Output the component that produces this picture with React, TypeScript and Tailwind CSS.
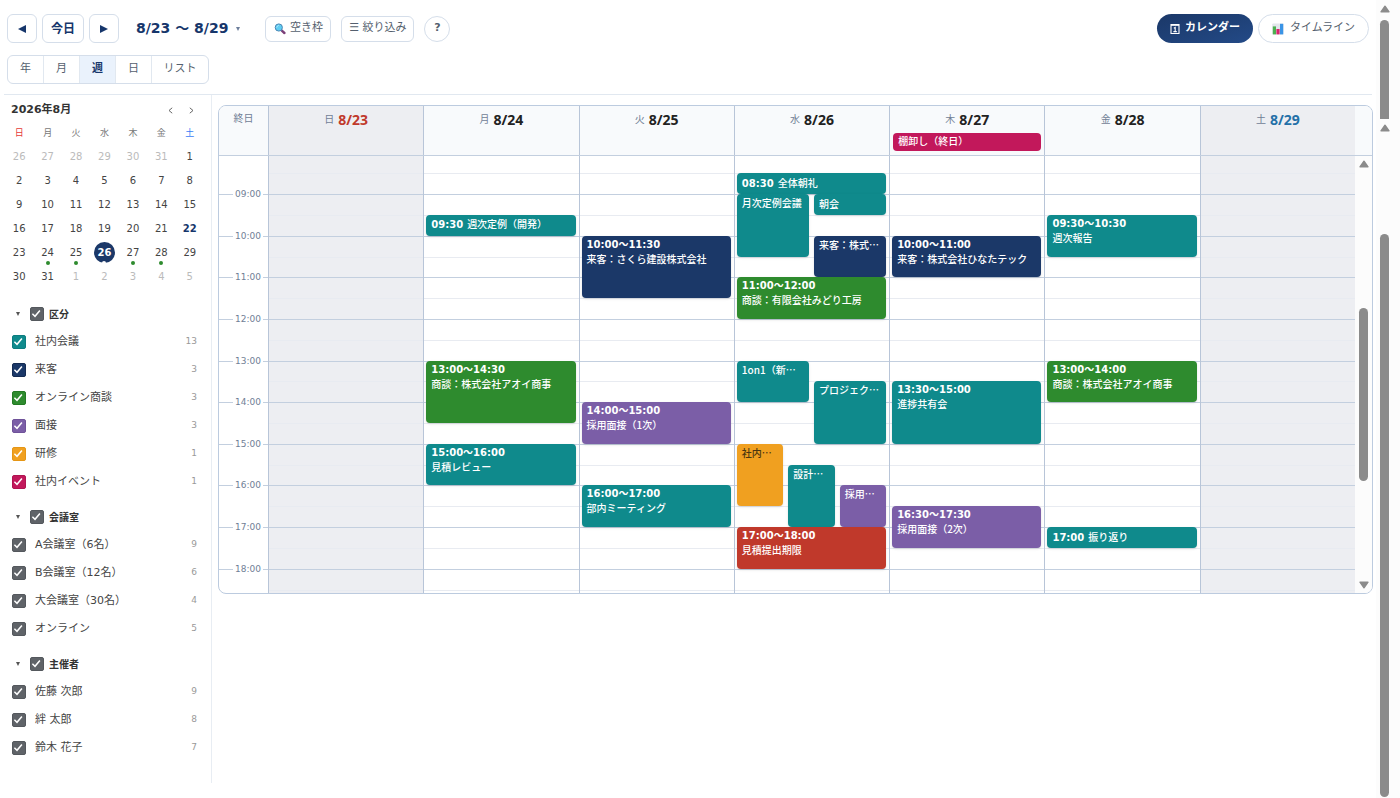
import React from 'react';

type Tone = 'teal' | 'navy' | 'green' | 'purple' | 'orange' | 'red' | 'pink' | 'gray';

const TONES: Record<Tone, string> = {
  teal: 'bg-[#0f8a8c] border-[#0c7d7f]',
  navy: 'bg-[#1b3868] border-[#142b52]',
  green: 'bg-[#2e8b2e] border-[#237a23]',
  purple: 'bg-[#7b5ea7] border-[#6f5299]',
  orange: 'bg-[#f0a020] border-[#e59615]',
  red: 'bg-[#c0392b] border-[#a93226]',
  pink: 'bg-[#c2185b] border-[#b01451]',
  gray: 'bg-[#5f6368] border-[#54585d]',
};

interface CalEvent {
  start: number;
  end: number;
  title: string;
  tone: Tone;
  time?: string;
  inline?: boolean;
  lane?: string;
}

interface Day {
  name: string;
  date: string;
  color: string;
  weekend?: boolean;
  allDay?: string;
  col: string;
  events: CalEvent[];
}

const DAYS: Day[] = [
  { name: '日', date: '8/23', color: 'text-[#c0392b]', weekend: true, col: 'col-start-2', events: [] },
  {
    name: '月', date: '8/24', color: 'text-[#222222]', col: 'col-start-3',
    events: [
      { start: 9.5, end: 10, time: '09:30', title: '週次定例（開発）', tone: 'teal', inline: true },
      { start: 13, end: 14.5, time: '13:00〜14:30', title: '商談：株式会社アオイ商事', tone: 'green' },
      { start: 15, end: 16, time: '15:00〜16:00', title: '見積レビュー', tone: 'teal' },
    ],
  },
  {
    name: '火', date: '8/25', color: 'text-[#222222]', col: 'col-start-4',
    events: [
      { start: 10, end: 11.5, time: '10:00〜11:30', title: '来客：さくら建設株式会社', tone: 'navy' },
      { start: 14, end: 15, time: '14:00〜15:00', title: '採用面接（1次）', tone: 'purple' },
      { start: 16, end: 17, time: '16:00〜17:00', title: '部内ミーティング', tone: 'teal' },
    ],
  },
  {
    name: '水', date: '8/26', color: 'text-[#222222]', col: 'col-start-5',
    events: [
      { start: 8.5, end: 9, time: '08:30', title: '全体朝礼', tone: 'teal', inline: true },
      { start: 9, end: 10.5, title: '月次定例会議', tone: 'teal', lane: 'col-start-1 col-span-3' },
      { start: 9, end: 9.5, title: '朝会', tone: 'teal', lane: 'col-start-4 col-span-3', inline: true },
      { start: 10, end: 11, title: '来客：株式…', tone: 'navy', lane: 'col-start-4 col-span-3' },
      { start: 11, end: 12, time: '11:00〜12:00', title: '商談：有限会社みどり工房', tone: 'green' },
      { start: 13, end: 14, title: '1on1（新…', tone: 'teal', lane: 'col-start-1 col-span-3' },
      { start: 13.5, end: 15, title: 'プロジェク…', tone: 'teal', lane: 'col-start-4 col-span-3' },
      { start: 15, end: 16.5, title: '社内…', tone: 'orange', lane: 'col-start-1 col-span-2' },
      { start: 15.5, end: 17, title: '設計…', tone: 'teal', lane: 'col-start-3 col-span-2' },
      { start: 16, end: 17, title: '採用…', tone: 'purple', lane: 'col-start-5 col-span-2' },
      { start: 17, end: 18, time: '17:00〜18:00', title: '見積提出期限', tone: 'red' },
    ],
  },
  {
    name: '木', date: '8/27', color: 'text-[#222222]', allDay: '棚卸し（終日）', col: 'col-start-6',
    events: [
      { start: 10, end: 11, time: '10:00〜11:00', title: '来客：株式会社ひなたテック', tone: 'navy' },
      { start: 13.5, end: 15, time: '13:30〜15:00', title: '進捗共有会', tone: 'teal' },
      { start: 16.5, end: 17.5, time: '16:30〜17:30', title: '採用面接（2次）', tone: 'purple' },
    ],
  },
  {
    name: '金', date: '8/28', color: 'text-[#222222]', col: 'col-start-7',
    events: [
      { start: 9.5, end: 10.5, time: '09:30〜10:30', title: '週次報告', tone: 'teal' },
      { start: 13, end: 14, time: '13:00〜14:00', title: '商談：株式会社アオイ商事', tone: 'green' },
      { start: 17, end: 17.5, time: '17:00', title: '振り返り', tone: 'teal', inline: true },
    ],
  },
  { name: '土', date: '8/29', color: 'text-[#2470a8]', weekend: true, col: 'col-start-8', events: [] },
];

/* The visible range starts at 08:05 and each grid row is five minutes. */
const rowOf = (hour: number) => Math.round(hour * 12) - 97 + 1;

const HOURS = [9, 10, 11, 12, 13, 14, 15, 16, 17, 18];
const HALVES = [8.5, 9.5, 10.5, 11.5, 12.5, 13.5, 14.5, 15.5, 16.5, 17.5, 18.5];

const MONTH: number[][] = [
  [26, 27, 28, 29, 30, 31, 1],
  [2, 3, 4, 5, 6, 7, 8],
  [9, 10, 11, 12, 13, 14, 15],
  [16, 17, 18, 19, 20, 21, 22],
  [23, 24, 25, 26, 27, 28, 29],
  [30, 31, 1, 2, 3, 4, 5],
];

interface Filter {
  label: string;
  count: number;
  tone: Tone;
}

const GROUPS: { title: string; items: Filter[] }[] = [
  {
    title: '区分',
    items: [
      { label: '社内会議', count: 13, tone: 'teal' },
      { label: '来客', count: 3, tone: 'navy' },
      { label: 'オンライン商談', count: 3, tone: 'green' },
      { label: '面接', count: 3, tone: 'purple' },
      { label: '研修', count: 1, tone: 'orange' },
      { label: '社内イベント', count: 1, tone: 'pink' },
    ],
  },
  {
    title: '会議室',
    items: [
      { label: 'A会議室（6名）', count: 9, tone: 'gray' },
      { label: 'B会議室（12名）', count: 6, tone: 'gray' },
      { label: '大会議室（30名）', count: 4, tone: 'gray' },
      { label: 'オンライン', count: 5, tone: 'gray' },
    ],
  },
  {
    title: '主催者',
    items: [
      { label: '佐藤 次郎', count: 9, tone: 'gray' },
      { label: '絆 太郎', count: 8, tone: 'gray' },
      { label: '鈴木 花子', count: 7, tone: 'gray' },
    ],
  },
];

function Check({ tone, id }: { tone: Tone; id: string }) {
  return (
    <span className="grid size-3.5 shrink-0">
      <input
        id={id}
        type="checkbox"
        defaultChecked
        className={`col-start-1 row-start-1 size-3.5 appearance-none rounded-[2px] border ${TONES[tone]}`}
      />
      <svg viewBox="0 0 14 14" className="pointer-events-none col-start-1 row-start-1 size-3.5" aria-hidden="true">
        <path d="M2.4 6.800 5 9.300 9.900 3.500" fill="none" stroke="#fff" strokeWidth="1.5" />
      </svg>
    </span>
  );
}

function Triangle({ className, d }: { className: string; d: string }) {
  return (
    <svg viewBox="0 0 10 8" className={className} aria-hidden="true">
      <path d={d} fill="currentColor" stroke="currentColor" strokeWidth="1.4" strokeLinejoin="round" />
    </svg>
  );
}

const UP = 'M5 1.2 9 6.8H1z';
const DOWN = 'M5 6.8 9 1.2H1z';

function SearchIcon() {
  return (
    <svg viewBox="0 0 12 12" className="size-3" aria-hidden="true">
      <path d="M7.8 7.6 10.4 10" stroke="#7b3f78" strokeWidth="2.4" strokeLinecap="round" />
      <circle cx="4.8" cy="4.5" r="3.6" fill="#5fcdf2" stroke="#4a86b4" strokeWidth="1" />
      <path d="M2.8 4.200a2.200 2.200 0 0 1 1.600-1.800" stroke="#b5ecff" strokeWidth=".9" fill="none" strokeLinecap="round" />
    </svg>
  );
}

function ChartIcon() {
  return (
    <svg viewBox="0 0 12 12" className="size-3" aria-hidden="true">
      <rect x=".3" y=".4" width="11.4" height="11.2" rx=".8" fill="#e3e6ec" />
      <rect x=".8" y="3.400" width="3.200" height="8" fill="#4cb050" />
      <rect x="4.400" y="6" width="3.200" height="5.400" fill="#d8246c" />
      <rect x="8" y=".8" width="3.200" height="10.600" fill="#3a94e6" />
    </svg>
  );
}

function DayIcon() {
  return (
    <svg viewBox="0 0 10 12" className="h-3 w-2.5" aria-hidden="true">
      <path d="M1 1.500h8v9H1z" fill="none" stroke="#fff" strokeWidth="1.1" />
      <path d="M1 2.100h8" stroke="#fff" strokeWidth="1.500" />
      <path d="M3.800 5.200 5.200 4.500v4M3.400 8.600h3.400" fill="none" stroke="#fff" strokeWidth="1.1" />
    </svg>
  );
}

function Toolbar() {
  const nav = 'flex h-[29px] items-center justify-center rounded-md border border-[#d5deea] bg-white text-[#16366b]';
  const tool = 'flex h-[26px] items-center justify-center rounded-md border border-[#d5deea] bg-white text-[11px] text-[#555f6e]';
  return (
    <header className="ml-1 mr-1 border-b border-[#e1e8f0] pb-2.5 pl-[3px] pr-[3px] pt-3.5">
      <div className="flex items-center">
        <div className="flex gap-[5px]">
          <button aria-label="前の週" className={`${nav} w-[30px]`}>
            <svg viewBox="0 0 8 8" className="size-2"><path d="M8 0v8L0 4z" fill="currentColor" /></svg>
          </button>
          <button className={`${nav} w-[42px] text-[12px] font-bold`}>今日</button>
          <button aria-label="次の週" className={`${nav} w-[30px]`}>
            <svg viewBox="0 0 8 8" className="size-2"><path d="M0 0v8l8-4z" fill="currentColor" /></svg>
          </button>
        </div>
        <button className="ml-[17px] flex items-center gap-2 whitespace-nowrap text-[14px] font-bold text-[#16366b]">
          <span>8/23 〜 8/29</span>
          <svg viewBox="0 0 4 4" className="size-1 text-[#6d7f9c]"><path d="M0 0h4L2 4z" fill="currentColor" /></svg>
        </button>
        <button className={`${tool} ml-[25px] w-[66px] gap-1`}>
          <SearchIcon />
          <span>空き枠</span>
        </button>
        <button className={`${tool} ml-2.5 w-[73px]`}>☰ 絞り込み</button>
        <button className="ml-2.5 size-[26px] rounded-full border border-[#d5deea] text-[11px] font-bold text-[#555f6e]">?</button>
        <div className="ml-auto flex gap-[5px]">
          <button className="flex h-[29px] w-24 items-center justify-center gap-[5px] rounded-full bg-linear-to-br from-[#1b3868] to-[#234a87] text-[11px] font-bold text-white">
            <DayIcon />
            <span>カレンダー</span>
          </button>
          <button className="flex h-[29px] w-[111px] items-center justify-center gap-1.5 rounded-full border border-[#d5deea] text-[11px] text-[#555f6e]">
            <ChartIcon />
            <span>タイムライン</span>
          </button>
        </div>
      </div>
      <div className="mt-3 flex">
        <div className="flex h-[29px] overflow-hidden rounded-md border border-[#d5deea] text-[11px] text-[#555f6e]">
          {['年', '月', '週', '日'].map((v) => (
            <button
              key={v}
              className={`w-9 border-r border-[#e1e8f0] ${v === '週' ? 'bg-[#eaf2fc] font-bold text-[#16366b]' : ''}`}
            >
              {v}
            </button>
          ))}
          <button className="w-14">リスト</button>
        </div>
      </div>
    </header>
  );
}

function MiniCalendar() {
  return (
    <section className="pl-[5px] pr-[7px]">
      <div className="flex h-[29px] items-center pl-1.5 pr-2.5 pt-0.5">
        <h2 className="text-[11px] font-bold text-[#333333]">2026年8月</h2>
        <button aria-label="前の月" className="ml-auto mr-4">
          <svg viewBox="0 0 5 7" className="h-[7px] w-[5px]"><path d="M4.200.8 1 3.500l3.200 2.700" fill="none" stroke="#555" strokeWidth=".9" /></svg>
        </button>
        <button aria-label="次の月">
          <svg viewBox="0 0 5 7" className="h-[7px] w-[5px]"><path d="M.8.8 4 3.500.8 6.200" fill="none" stroke="#555" strokeWidth=".9" /></svg>
        </button>
      </div>
      <table className="w-full table-fixed text-center text-[10px] text-[#444444]">
        <thead>
          <tr className="h-5 text-[9px] text-[#777777]">
            {['日', '月', '火', '水', '木', '金', '土'].map((d) => (
              <th key={d} className={`p-0 font-normal ${d === '日' ? 'text-[#e53935]' : d === '土' ? 'text-[#3b82f6]' : ''}`}>
                {d}
              </th>
            ))}
          </tr>
        </thead>
        <tbody>
          {MONTH.map((week, w) => (
            <tr key={w} className="h-6">
              {week.map((n, i) => {
                const outside = (w === 0 && n > 20) || (w === 5 && n < 20);
                const selected = w === 4 && n === 26;
                const dot = w === 4 && i > 0 && i < 6;
                return (
                  <td key={i} className="p-0">
                    <button
                      className={`relative mx-auto flex size-[21px] items-center justify-center rounded-full ${
                        selected ? 'bg-[#1b3868] font-bold text-white' : outside ? 'text-[#bbbbbb]' : ''
                      } ${w === 3 && n === 22 ? 'font-bold text-[#16366b]' : ''}`}
                    >
                      {n}
                      {dot && (
                        <span
                          className={`absolute inset-x-0 -bottom-0.5 mx-auto size-1 rounded-full ${selected ? 'bg-white' : 'bg-[#2e8b2e]'}`}
                        />
                      )}
                    </button>
                  </td>
                );
              })}
            </tr>
          ))}
        </tbody>
      </table>
    </section>
  );
}

function Sidebar() {
  return (
    <aside className="w-[212px] shrink-0 border-r border-[#e8edf3] pb-[21px]">
      <MiniCalendar />
      <div className="mt-3 flex flex-col gap-[7px]">
        {GROUPS.map((g, gi) => (
          <section key={g.title}>
            <div className="flex h-7 items-center pl-4">
              <svg viewBox="0 0 4 4" className="mr-[10px] size-1 text-[#555555]"><path d="M0 0h4L2 4z" fill="currentColor" /></svg>
              <Check tone="gray" id={`g${gi}`} />
              <label htmlFor={`g${gi}`} className="ml-[5px] text-[10px] font-bold text-[#333333]">{g.title}</label>
            </div>
            {g.items.map((f, i) => (
              <div key={f.label} className="flex h-7 items-center pl-3 pr-3.5">
                <Check tone={f.tone} id={`g${gi}-${i}`} />
                <label htmlFor={`g${gi}-${i}`} className="ml-[9px] flex-1 text-[11px] text-[#444444]">{f.label}</label>
                <span className="text-[9px] text-[#999999]">{f.count}</span>
              </div>
            ))}
          </section>
        ))}
      </div>
    </aside>
  );
}

function EventBlock({ e }: { e: CalEvent }) {
  const text = e.tone === 'orange' ? 'text-[#4a3510]' : 'text-white';
  const align = e.inline ? 'items-center' : 'items-start pt-0.5';
  return (
    <div
      className={`flex min-w-0 overflow-hidden whitespace-nowrap rounded-sm px-[5px] text-[10px] leading-[14px] shadow-sm ${TONES[e.tone]} ${text} ${align} ${e.lane ?? 'col-span-full'}`}
      style={{ gridRow: `${rowOf(e.start)} / ${rowOf(e.end)}` }}
    >
      {e.inline ? (
        <p className="flex gap-1">
          {e.time && <span className="font-bold">{e.time}</span>}
          <span className="font-medium">{e.title}</span>
        </p>
      ) : (
        <div>
          {e.time && <p className="h-3.5 font-bold">{e.time}</p>}
          <p className="h-3.5 font-['Noto_Sans_CJK_JP','DejaVu_Sans',sans-serif] font-medium">{e.title}</p>
        </div>
      )}
    </div>
  );
}

function WeekView() {
  return (
    <main className="min-w-0 flex-1 pb-4 pl-1.5 pr-[3px] pt-2.5">
      <div className="overflow-hidden rounded-lg border border-[#bccbdf]">
        <div className="flex h-[50px] border-b border-[#c3cfdf] bg-[#f8fafc]">
          <div className="grid flex-1 grid-cols-[49px_repeat(7,minmax(0,1fr))]">
            <div className="pt-[5px] text-center text-[10px] text-[#718096]">終日</div>
            {DAYS.map((d) => (
              <div key={d.date} className={`border-l border-[#b8c5d8] pl-[3px] pr-[3px] ${d.weekend ? 'bg-[#edeef2]' : ''}`}>
                <div className="flex h-[27px] items-center justify-center gap-1">
                  <span className="text-[10px] text-[#718096]">{d.name}</span>
                  <span className={`font-['Noto_Sans',sans-serif] text-[14px] font-bold leading-[18px] ${d.color}`}>{d.date}</span>
                </div>
                {d.allDay && (
                  <div className="h-[18px] rounded-sm bg-[#c2185b] px-[5px] text-[10px] font-medium leading-[17px] text-white">{d.allDay}</div>
                )}
              </div>
            ))}
          </div>
          <div className="w-[17px]" />
        </div>
        <div className="flex h-[437px]">
          <div className="grid flex-1 grid-cols-[49px_repeat(7,minmax(0,1fr))] grid-rows-[repeat(126,minmax(0,1fr))]">
            {DAYS.filter((d) => d.weekend).map((d) => (
              <div key={d.date} className={`row-span-full bg-[#edeef2] ${d.col}`} />
            ))}
            {HALVES.map((h) => (
              <div key={h} className="col-start-2 -col-end-1 border-t border-[#e8ebf1]" style={{ gridRow: `${rowOf(h)} / span 1` }} />
            ))}
            {HOURS.map((h) => (
              <div key={h} className="col-start-1 -col-end-1 border-t border-[#c3cfdf]" style={{ gridRow: `${rowOf(h)} / span 1` }} />
            ))}
            {HOURS.map((h) => (
              <div
                key={h}
                className="col-start-1 flex items-center justify-end pr-[5px]"
                style={{ gridRow: `${rowOf(h) - 2} / ${rowOf(h) + 2}` }}
              >
                <span className="bg-white px-0.5 text-[9px] leading-[12px] text-[#718096]">{`${String(h).padStart(2, '0')}:00`}</span>
              </div>
            ))}
            {DAYS.map((d) => (
              <div
                key={d.date}
                className={`row-span-full grid grid-cols-6 grid-rows-subgrid gap-x-[5px] border-l border-[#b8c5d8] pl-0.5 pr-[3px] ${d.col}`}
              >
                {d.events.map((e) => (
                  <EventBlock key={e.title} e={e} />
                ))}
              </div>
            ))}
          </div>
          <div className="flex w-[17px] flex-col items-center bg-[#fcfcfc] py-1 text-[#8b8b8b]">
            <Triangle className="h-2 w-2.5" d={UP} />
            <div className="mt-[140px] h-[173px] w-[9px] rounded-full bg-current" />
            <Triangle className="mt-auto h-2 w-2.5" d={DOWN} />
          </div>
        </div>
      </div>
    </main>
  );
}

export default function App() {
  return (
    <div className="flex min-h-screen bg-white font-['DejaVu_Sans','Noto_Sans_CJK_JP',sans-serif]">
      <div className="min-w-0 flex-1">
        <Toolbar />
        <div className="flex">
          <Sidebar />
          <WeekView />
        </div>
      </div>
      <div className="flex w-6 shrink-0 flex-col bg-[#fcfcfc] pb-px pl-1 pt-[5px] text-[#8b8b8b]">
        <Triangle className="h-2 w-2.5" d={UP} />
        <div className="mt-[7px] h-[99px] w-[9px] rounded-t-full bg-current" />
        <Triangle className="mt-[5px] h-2 w-2.5" d={UP} />
        <div className="mt-[102px] w-[9px] flex-1 rounded-full bg-current" />
      </div>
    </div>
  );
}
